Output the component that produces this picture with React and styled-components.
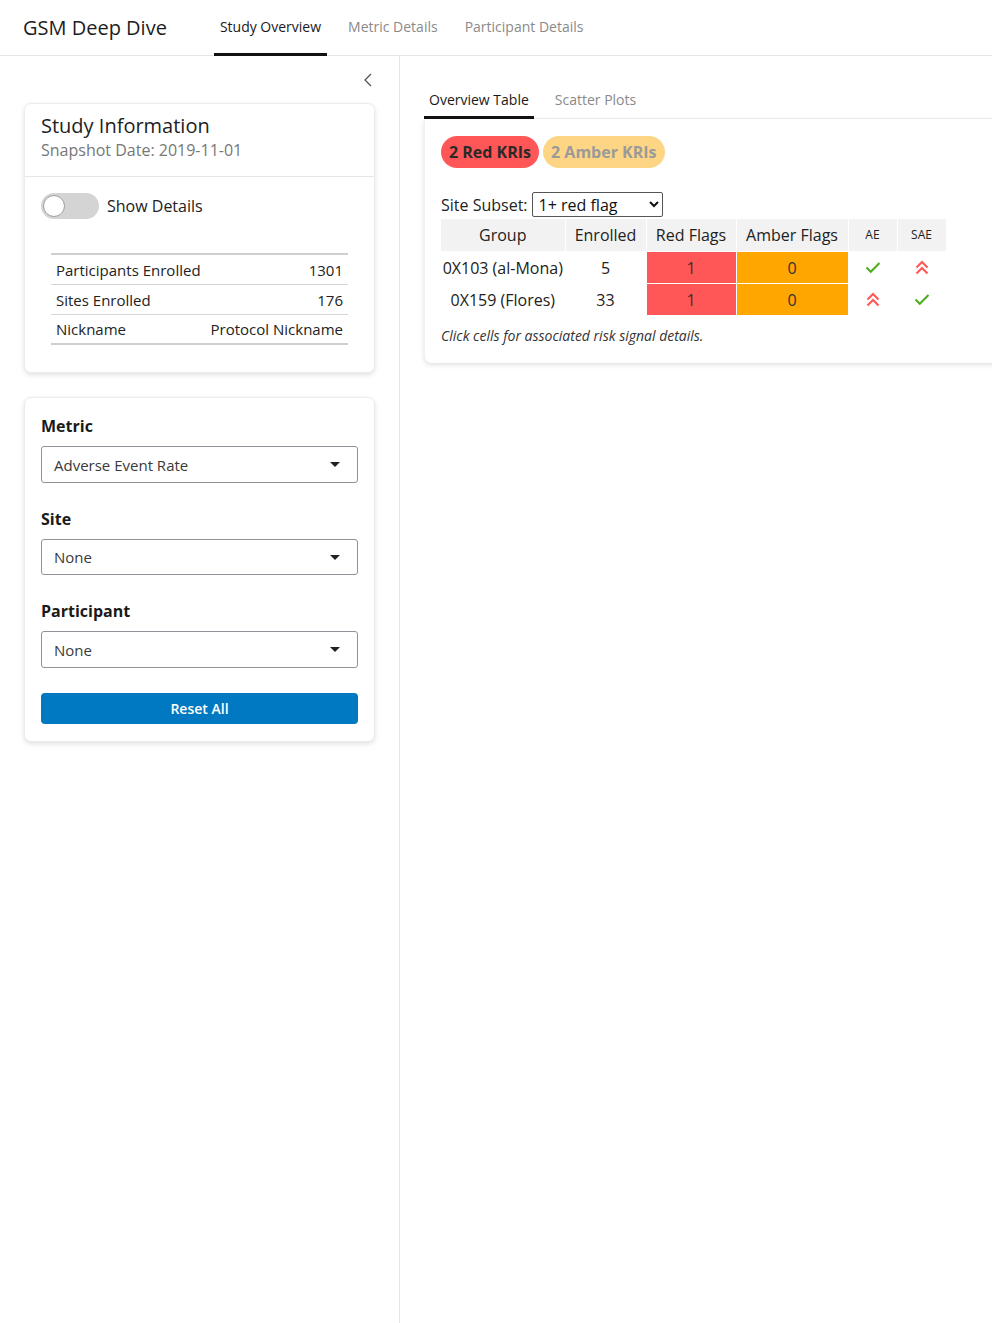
import React from "react";
import styled, { createGlobalStyle } from "styled-components";

const Global = createGlobalStyle`
  html, body { margin: 0; padding: 0; background: #fff; }
  body { font-family: "Open Sans", "Noto Sans", sans-serif; color: #222; }
  * { box-sizing: border-box; }
`;

const Page = styled.div`
  display: flex;
  flex-direction: column;
  min-height: 1323px;
  overflow: hidden;
`;

const Header = styled.header`
  height: 56px;
  display: flex;
  align-items: stretch;
  border-bottom: 1px solid #e6e6e6;
  padding-left: 23px;
`;

const Brand = styled.div`
  font-size: 20px;
  color: #1d1d1d;
  display: flex;
  align-items: center;
  margin-right: 47px;
  padding-bottom: 1px;
`;

const Nav = styled.nav`
  display: flex;
  gap: 15px;
`;

const NavTab = styled.div`
  font-size: 14px;
  padding: 0 6px 0;
  display: flex;
  align-items: center;
  color: ${(p) => (p.$active ? "#1a1a1a" : "#8a8a8a")};
  border-bottom: 3px solid ${(p) => (p.$active ? "#111" : "transparent")};
  margin-bottom: -1px;
`;

const Body = styled.div`
  flex: 1;
  display: flex;
`;

const Sidebar = styled.aside`
  width: 400px;
  flex-shrink: 0;
  border-right: 1px solid #e6e6e6;
  padding: 16px 24px 24px 24px;
`;

const CollapseRow = styled.div`
  height: 18px;
  margin-bottom: 13px;
  display: flex;
  justify-content: flex-end;
  padding-right: 2px;
`;

const Card = styled.section`
  background: #fff;
  border: 1px solid #ececec;
  border-radius: 7px;
  box-shadow: 0 2px 5px rgba(0, 0, 0, 0.12);
  margin-bottom: 24px;
`;

const CardHeader = styled.div`
  padding: 10px 16px 14px;
  border-bottom: 1px solid #e6e6e6;
`;

const CardTitle = styled.div`
  font-size: 20px;
  line-height: 24px;
  color: #222;
`;

const CardSub = styled.div`
  font-size: 16px;
  line-height: 24px;
  color: #777;
`;

const CardBody = styled.div`
  padding: ${(p) => p.$pad || "16px"};
`;

const ToggleRow = styled.label`
  display: flex;
  align-items: center;
  gap: 8px;
  font-size: 16px;
  color: #222;
  height: 26px;
  margin-bottom: 34px;
`;

const Track = styled.span`
  width: 58px;
  height: 26px;
  border-radius: 13px;
  background: #d4d4d4;
  display: flex;
  align-items: center;
  padding-left: 2px;
`;

const Knob = styled.span`
  width: 22px;
  height: 22px;
  border-radius: 50%;
  background: #fff;
  border: 1px solid #9e9e9e;
`;

const InfoTable = styled.table`
  width: 297px;
  margin: 0 10px 10px 10px;
  border-collapse: collapse;
  border-top: 2px solid #cfcfcf;
  border-bottom: 2px solid #cfcfcf;
  font-size: 15px;
  color: #222;
  td {
    height: 30px;
    padding: 1px 5px 0;
    border-bottom: 1px solid #d6d6d6;
  }
  td:last-child { text-align: right; }
`;

const FieldLabel = styled.div`
  font-size: 16px;
  font-weight: 700;
  line-height: 24px;
  color: #1a1a1a;
  margin-bottom: 8px;
  margin-top: ${(p) => (p.$first ? "0" : "24px")};
`;

const FakeSelect = styled.div`
  height: ${(p) => p.$h || 36}px;
  border: 1px solid #8e939a;
  border-radius: 3px;
  display: flex;
  align-items: center;
  justify-content: space-between;
  padding: 0 17px 0 12px;
  font-size: 15px;
  color: #3a3a3a;
`;

const Caret = styled.span`
  width: 0;
  height: 0;
  border-left: 5px solid transparent;
  border-right: 5px solid transparent;
  border-top: 5px solid #222;
`;

const ResetButton = styled.button`
  margin-top: 25px;
  width: 100%;
  height: 31px;
  border: none;
  border-radius: 4px;
  background: #0079c2;
  color: #fff;
  font-family: inherit;
  font-size: 14px;
  font-weight: 600;
`;

const Main = styled.main`
  flex: 1;
  padding: 24px 0 0 24px;
  overflow: hidden;
`;

const TabBar = styled.div`
  display: flex;
  gap: 16px;
  border-bottom: 1px solid #eeeeee;
  height: 39px;
`;

const SubTab = styled.div`
  font-size: 14px;
  padding: 2px 5px 0;
  display: flex;
  align-items: center;
  color: ${(p) => (p.$active ? "#1a1a1a" : "#8a8a8a")};
  border-bottom: 3px solid ${(p) => (p.$active ? "#111" : "transparent")};
  margin-bottom: -1px;
`;

const MainCard = styled.section`
  margin-right: -12px;
  background: #fff;
  border-radius: 0 0 7px 7px;
  box-shadow: 0 2px 5px rgba(0, 0, 0, 0.12);
  border-left: 1px solid #f0f0f0;
  padding: 17px 16px 17px 16px;
`;

const Badges = styled.div`
  display: flex;
  gap: 4px;
  margin-bottom: 24px;
`;

const Badge = styled.span`
  height: 32px;
  border-radius: 16px;
  padding: 0 8px;
  display: flex;
  align-items: center;
  font-size: 16px;
  font-weight: 700;
  background: ${(p) => p.$bg};
  color: ${(p) => p.$fg};
`;

const SubsetRow = styled.div`
  display: flex;
  align-items: center;
  gap: 4px;
  font-size: 16px;
  color: #222;
  height: 25px;
  margin-bottom: 2px;
`;

const NativeSelect = styled.select`
  width: 131px;
  height: 25px;
  font-family: "Open Sans", sans-serif;
  font-size: 16px;
  color: #111;
  border: 1px solid #555;
  border-radius: 2px;
  background: #fff;
  padding: 0 2px;
`;

const RiskTable = styled.table`
  border-collapse: collapse;
  font-size: 16px;
  color: #222;
  th {
    background: #f2f2f2;
    font-weight: 400;
    height: 32px;
    border: 1px solid #fff;
    border-top: none;
    padding: 0;
  }
  td {
    height: 32px;
    border: 1px solid #fff;
    text-align: center;
    padding: 1px 0 0;
  }
  tr td:first-child, tr th:first-child { border-left: none; }
`;

const SmallTh = styled.th`
  && { font-size: 12px; }
`;

const FlagCell = styled.td`
  && { background: ${(p) => p.$bg}; color: #333; }
`;

const Note = styled.div`
  margin-top: 10px;
  font-size: 14px;
  line-height: 20px;
  font-style: italic;
  color: #333;
`;

const Check = () => (
  <svg width="16" height="13" viewBox="0 0 16 13" style={{ display: "block", margin: "0 auto" }}>
    <polyline points="1.5,6.5 5.8,10.8 14.5,2" fill="none" stroke="#4cae1c" strokeWidth="2" />
  </svg>
);

const Up = () => (
  <svg width="14" height="15" viewBox="0 0 14 15" style={{ display: "block", margin: "0 auto" }}>
    <polyline points="1.5,7.5 7,2 12.5,7.5" fill="none" stroke="#ff5a5a" strokeWidth="2.2" />
    <polyline points="1.5,13.5 7,8 12.5,13.5" fill="none" stroke="#ff5a5a" strokeWidth="2.2" />
  </svg>
);

const Chevron = () => (
  <svg width="10" height="16" viewBox="0 0 10 16">
    <polyline points="8,2 2,8 8,14" fill="none" stroke="#555" strokeWidth="1.3" />
  </svg>
);

export default function App() {
  return (
    <>
      <Global />
      <Page>
        <Header>
          <Brand>GSM Deep Dive</Brand>
          <Nav>
            <NavTab $active>Study Overview</NavTab>
            <NavTab>Metric Details</NavTab>
            <NavTab>Participant Details</NavTab>
          </Nav>
        </Header>
        <Body>
          <Sidebar>
            <CollapseRow>
              <Chevron />
            </CollapseRow>
            <Card>
              <CardHeader>
                <CardTitle>Study Information</CardTitle>
                <CardSub>Snapshot Date: 2019-11-01</CardSub>
              </CardHeader>
              <CardBody $pad="16px 16px 17px">
                <ToggleRow>
                  <Track>
                    <Knob />
                  </Track>
                  Show Details
                </ToggleRow>
                <InfoTable>
                  <tbody>
                    <tr>
                      <td>Participants Enrolled</td>
                      <td>1301</td>
                    </tr>
                    <tr>
                      <td>Sites Enrolled</td>
                      <td>176</td>
                    </tr>
                    <tr>
                      <td>Nickname</td>
                      <td>Protocol Nickname</td>
                    </tr>
                  </tbody>
                </InfoTable>
              </CardBody>
            </Card>
            <Card>
              <CardBody $pad="16px 16px 17px">
                <FieldLabel $first>Metric</FieldLabel>
                <FakeSelect $h={37}>
                  Adverse Event Rate
                  <Caret />
                </FakeSelect>
                <FieldLabel>Site</FieldLabel>
                <FakeSelect>
                  None
                  <Caret />
                </FakeSelect>
                <FieldLabel>Participant</FieldLabel>
                <FakeSelect $h={37}>
                  None
                  <Caret />
                </FakeSelect>
                <ResetButton>Reset All</ResetButton>
              </CardBody>
            </Card>
          </Sidebar>
          <Main>
            <TabBar>
              <SubTab $active>Overview Table</SubTab>
              <SubTab>Scatter Plots</SubTab>
            </TabBar>
            <MainCard>
              <Badges>
                <Badge $bg="#ff5757" $fg="#2a2a2a">2 Red KRIs</Badge>
                <Badge $bg="#fdd584" $fg="#9a9a9a">2 Amber KRIs</Badge>
              </Badges>
              <SubsetRow>
                Site Subset:
                <NativeSelect defaultValue="1">
                  <option value="1">1+ red flag</option>
                  <option value="2">All</option>
                </NativeSelect>
              </SubsetRow>
              <RiskTable>
                <colgroup>
                  <col style={{ width: 124 }} />
                  <col style={{ width: 81 }} />
                  <col style={{ width: 90 }} />
                  <col style={{ width: 112 }} />
                  <col style={{ width: 49 }} />
                  <col style={{ width: 49 }} />
                </colgroup>
                <thead>
                  <tr>
                    <th>Group</th>
                    <th>Enrolled</th>
                    <th>Red Flags</th>
                    <th>Amber Flags</th>
                    <SmallTh>AE</SmallTh>
                    <SmallTh>SAE</SmallTh>
                  </tr>
                </thead>
                <tbody>
                  <tr>
                    <td>0X103 (al-Mona)</td>
                    <td>5</td>
                    <FlagCell $bg="#ff5757">1</FlagCell>
                    <FlagCell $bg="#ffa600">0</FlagCell>
                    <td><Check /></td>
                    <td><Up /></td>
                  </tr>
                  <tr>
                    <td>0X159 (Flores)</td>
                    <td>33</td>
                    <FlagCell $bg="#ff5757">1</FlagCell>
                    <FlagCell $bg="#ffa600">0</FlagCell>
                    <td><Up /></td>
                    <td><Check /></td>
                  </tr>
                </tbody>
              </RiskTable>
              <Note>Click cells for associated risk signal details.</Note>
            </MainCard>
          </Main>
        </Body>
      </Page>
    </>
  );
}
